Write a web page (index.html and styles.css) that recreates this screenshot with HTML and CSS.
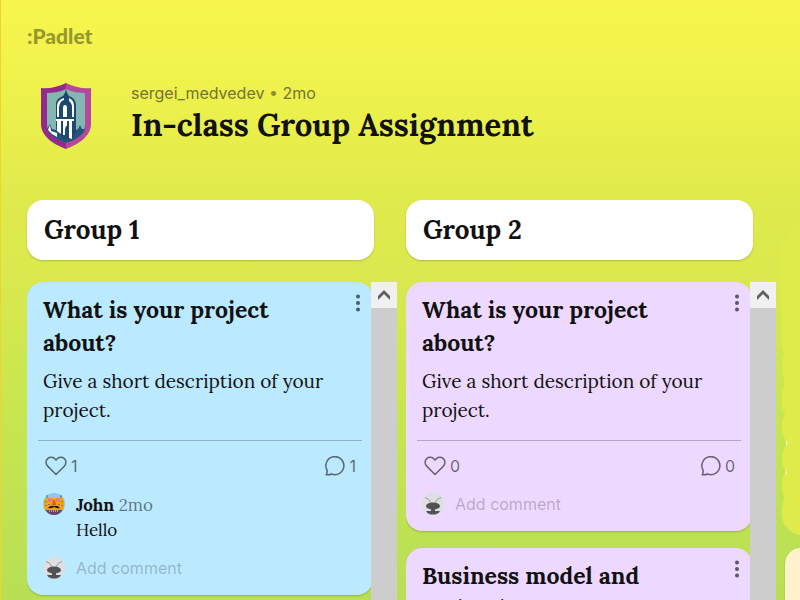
FILE: index.html
```html
<!DOCTYPE html>
<html lang="en">
<head>
<meta charset="utf-8">
<meta name="viewport" content="width=device-width, initial-scale=1">
<title>In-class Group Assignment</title>
<link rel="stylesheet" href="styles.css">
</head>
<body>
<svg class="symbols" aria-hidden="true">
  <symbol id="dots" viewBox="0 0 6 18"><circle cx="3" cy="2.500" r="2"/><circle cx="3" cy="9" r="2"/><circle cx="3" cy="15.500" r="2"/></symbol>
  <symbol id="heart" viewBox="0 0 22 20"><path d="M11 18.500 2.900 10.400C.4 7.800.5 4.500 2.700 2.600 5 .6 8.300 1.100 10 3L11 4.100 12 3C13.700 1.100 17 .6 19.300 2.600 21.500 4.500 21.600 7.800 19.100 10.400Z" fill="none" stroke="currentColor" stroke-width="1.500" stroke-linejoin="round"/></symbol>
  <symbol id="bubble" viewBox="0 0 20 20"><path d="M1.200 18.700C2.300 17.300 2.400 15.600 1.900 13.800A9 9 0 1 1 6.500 18C5 18.800 3 19 1.200 18.700Z" fill="none" stroke="currentColor" stroke-width="1.500" stroke-linejoin="round"/></symbol>
  <symbol id="chevron" viewBox="0 0 14 12"><path d="M7 1 13 7V11L7 5 1 11V7Z" fill="currentColor"/></symbol>
  <symbol id="ant" viewBox="0 0 22 22"><circle cx="11" cy="11" r="11" fill="#dedfe1"/><path d="M3 4.500Q7 5 9 10M19 4.500Q15 5 13 10" fill="none" stroke="#888" stroke-width=".8"/><ellipse cx="11" cy="13" rx="7" ry="3.600" fill="#505254"/><path d="M9 16h4v2h5q-1 3-4.500 3.600h-5Q5 21 4 18h5Z" fill="#505254"/></symbol>
</svg>
<header>
  <a class="brand" href="#">:Padlet</a>
  <div class="board">
    <svg class="crest" viewBox="0 0 50 66" aria-hidden="true">
      <path d="M25 0C17 4 8 6 0 5v36c0 12 12 20 25 25Z" fill="#95298c"/>
      <path d="M25 0c8 4 17 6 25 5v36c0 12-12 20-25 25Z" fill="#b5479c"/>
      <path d="M25 6C19 9 12 10 6 10v31c0 9 8 14 19 19 11-5 19-10 19-19V10C38 10 31 9 25 6Z" fill="#83b8b2"/>
      <path d="M6 46l3-5 2 5 4 1 20 0 2-1 2-4 2 4 3 0Q42 54 25 60 9 54 6 46Z" fill="#215478"/>
      <path d="M15 46V20q1-5 7-7l3-5 3 5q6 2 7 8v27l-4 8h-9Z" fill="#1d486e"/>
      <path d="M16 23q0-6 7-8v2q-4 1-5 7v10h-2ZM22 34V25q0-3 2-3t2 3v9ZM28 15q5 2 5 8v11h-2V24q0-4-3-6Z" fill="#fff"/>
      <path d="M15 36h18v2H15ZM16 38h4v13l-4-3ZM22 38h4v5q-2 0-2 5v4h-2ZM28 38h3v18l-3-1ZM7 47l2-5 1 6 6 2v4q-5-2-9-7Z" fill="#fff"/>
      <path d="M25 7v6" stroke="#1d486e" stroke-width="1"/>
    </svg>
    <div>
      <p class="byline">sergei_medvedev <span>•</span> 2mo</p>
      <h1>In-class Group Assignment</h1>
    </div>
  </div>
</header>
<main>
  <section class="column">
    <h2>Group 1</h2>
    <div class="scroller">
      <div class="cards">
        <article class="card blue">
          <button class="more" aria-label="Post actions"><svg><use href="#dots"/></svg></button>
          <h3>What is your project about?</h3>
          <p class="text">Give a short description of your project.</p>
          <div class="reactions">
            <button><svg class="heart"><use href="#heart"/></svg>1</button>
            <button><svg class="bubble"><use href="#bubble"/></svg>1</button>
          </div>
          <div class="comment">
            <svg class="avatar" viewBox="0 0 22 22" aria-hidden="true"><circle cx="11" cy="11" r="11" fill="#92c5ee"/><path d="M2 16h18q-3 6-9 6t-9-6Z" fill="#68406f"/><rect x="1" y="5" width="20" height="12" rx="3" fill="#eca61e"/><path d="M4 5V2M18 5V2" stroke="#397858"/><path d="M5 7h4M13 7h4" stroke="#da78a8" stroke-width="3"/><path d="M10 7h2l1 5H9Z" fill="#dc5a23"/><path d="M5 15q2-3 6-2 4-1 6 2-3 1-6-1-3 2-6 1Z" fill="#2a1a20"/><path d="M3 8v1M3 12v1M19 8v1M19 12v1M6 11v1M16 11v1" stroke="#70401a"/><path d="M6 18h10" stroke="#c79b79" stroke-width="2" stroke-dasharray="1 1"/></svg>
            <div><p><b>John</b> <span class="age">2mo</span></p><p>Hello</p></div>
          </div>
          <label class="add"><svg class="avatar"><use href="#ant"/></svg><input type="text" placeholder="Add comment" aria-label="Add comment"></label>
        </article>
      </div>
      <div class="track"><button aria-label="Scroll up"><svg><use href="#chevron"/></svg></button></div>
    </div>
  </section>
  <section class="column">
    <h2>Group 2</h2>
    <div class="scroller">
      <div class="cards">
        <article class="card purple">
          <button class="more" aria-label="Post actions"><svg><use href="#dots"/></svg></button>
          <h3>What is your project about?</h3>
          <p class="text">Give a short description of your project.</p>
          <div class="reactions">
            <button><svg class="heart"><use href="#heart"/></svg>0</button>
            <button><svg class="bubble"><use href="#bubble"/></svg>0</button>
          </div>
          <label class="add"><svg class="avatar"><use href="#ant"/></svg><input type="text" placeholder="Add comment" aria-label="Add comment"></label>
        </article>
        <article class="card purple">
          <button class="more" aria-label="Post actions"><svg><use href="#dots"/></svg></button>
          <h3>Business model and technology</h3>
        </article>
      </div>
      <div class="track"><button aria-label="Scroll up"><svg><use href="#chevron"/></svg></button></div>
    </div>
  </section>
  <section class="column last">
    <svg class="leaves" viewBox="0 0 30 335" aria-hidden="true"><path d="M30 0V335H19Q8 332 3 322 0 310 4 299 3 293 2 289 1 281 4 274L6 272Q2 266 2 259 2 251 6 245L7 242Q2 236 2 228 1 221 5 214 1 207 2 200 1 190 5 184 2 176 3 168 1 160 4 153 0 145 3 136 1 126 2 118L0 100Q-2 70-14 58L0 46Z" fill="#dfea4b"/><path d="M5 270l2 2-1 4ZM6 240l2 3-2 3Z" fill="#f5f6ae"/></svg>
    <article class="card cream"></article>
  </section>
</main>
</body>
</html>
```
FILE: styles.css
```css
* { box-sizing: border-box; }
body {
  margin: 0;
  height: 100vh;
  overflow: hidden;
  display: flex;
  flex-direction: column;
  color: #111;
  background: linear-gradient(#f7f54d 0, #f0f24c 80px, #dfea4b 200px, #dae94e 270px, #c9e650 400px, #b8df55 600px);
  border-left: 1px solid #efd527;
  font-family: Lora, "Liberation Serif", serif;
}
h1, h2, h3, p { margin: 0; }
h1, h2, h3 { font-weight: 700; }
button { border: 0; padding: 0; background: none; color: inherit; font: inherit; }
svg { display: block; }
.symbols { position: absolute; width: 0; height: 0; }
header { height: 200px; padding: 24px 26px 0; flex: none; }
.brand {
  display: block;
  color: #96982e;
  text-decoration: none;
  font: 900 21px/24px Lato, sans-serif;
}
.board { display: flex; gap: 40px; padding: 35px 0 0 14px; }
.crest { width: 50px; height: 66px; flex: none; }
.byline { font: 16px/20px Inter, sans-serif; color: #72752b; }
.byline span { color: #8d9037; }
h1 { font-size: 31px; line-height: 44px; white-space: nowrap; }
main { flex: 1; min-height: 0; display: flex; gap: 9px; padding-left: 26px; overflow: hidden; }
.column { flex: none; width: 370px; display: flex; flex-direction: column; gap: 22px; }
h2 {
  margin-right: 23px;
  padding: 12px 17px;
  background: #fff;
  border-radius: 16px;
  box-shadow: 0 1px 2px rgba(0, 0, 0, .2);
  font-size: 26px;
  line-height: 36px;
}
.scroller { flex: 1; min-height: 0; display: flex; overflow: hidden; }
.cards { flex: 1; display: flex; flex-direction: column; gap: 17px; }
.card {
  position: relative;
  flex: none;
  margin-right: -2px;
  padding: 11px 16px 16px;
  border-radius: 16px;
  box-shadow: 0 1px 2px rgba(0, 0, 0, .2);
}
.blue { background: #bbe9ff; }
.purple { background: #edd8ff; }
.cream { background: #fff1cb; height: 80px; }
h3 { padding-right: 60px; font-size: 23px; line-height: 33px; }
.text { margin-top: 8px; padding-right: 20px; font-size: 19px; line-height: 29px; }
.more { position: absolute; top: 12px; right: 12px; opacity: .6; }
.more svg { width: 6px; height: 18px; }
.reactions {
  display: flex;
  justify-content: space-between;
  margin: 15px -5px 0;
  padding: 11px 6px 0 7px;
  border-top: 1px solid rgba(17, 17, 17, .25);
  color: rgba(17, 17, 17, .6);
  font: 16px/28px Inter, sans-serif;
}
.reactions button { display: flex; align-items: center; gap: 4px; }
.heart { width: 22px; height: 20px; }
.bubble { width: 20px; height: 20px; }
.comment { display: flex; gap: 11px; margin-top: 13px; font-size: 17px; line-height: 25px; }
.avatar { width: 22px; height: 22px; flex: none; }
.age { color: rgba(17, 17, 17, .55); }
.add { display: flex; align-items: center; gap: 11px; margin-top: 13px; height: 22px; }
.comment + .add { margin-top: 14px; }
.add input {
  flex: 1;
  min-width: 0;
  padding: 0;
  border: 0;
  background: none;
  font: 16px/22px Inter, sans-serif;
}
.add input::placeholder { color: rgba(17, 17, 17, .25); }
.track { position: relative; flex: none; width: 26px; background: #cdcdcd; }
.track button { display: grid; place-items: center; width: 26px; height: 26px; background: #f0f0f0; color: #606060; }
.track svg { width: 14px; height: 12px; }
.last { gap: 13px; }
.leaves { flex: none; width: 30px; height: 335px; margin-left: -5px; }
```
